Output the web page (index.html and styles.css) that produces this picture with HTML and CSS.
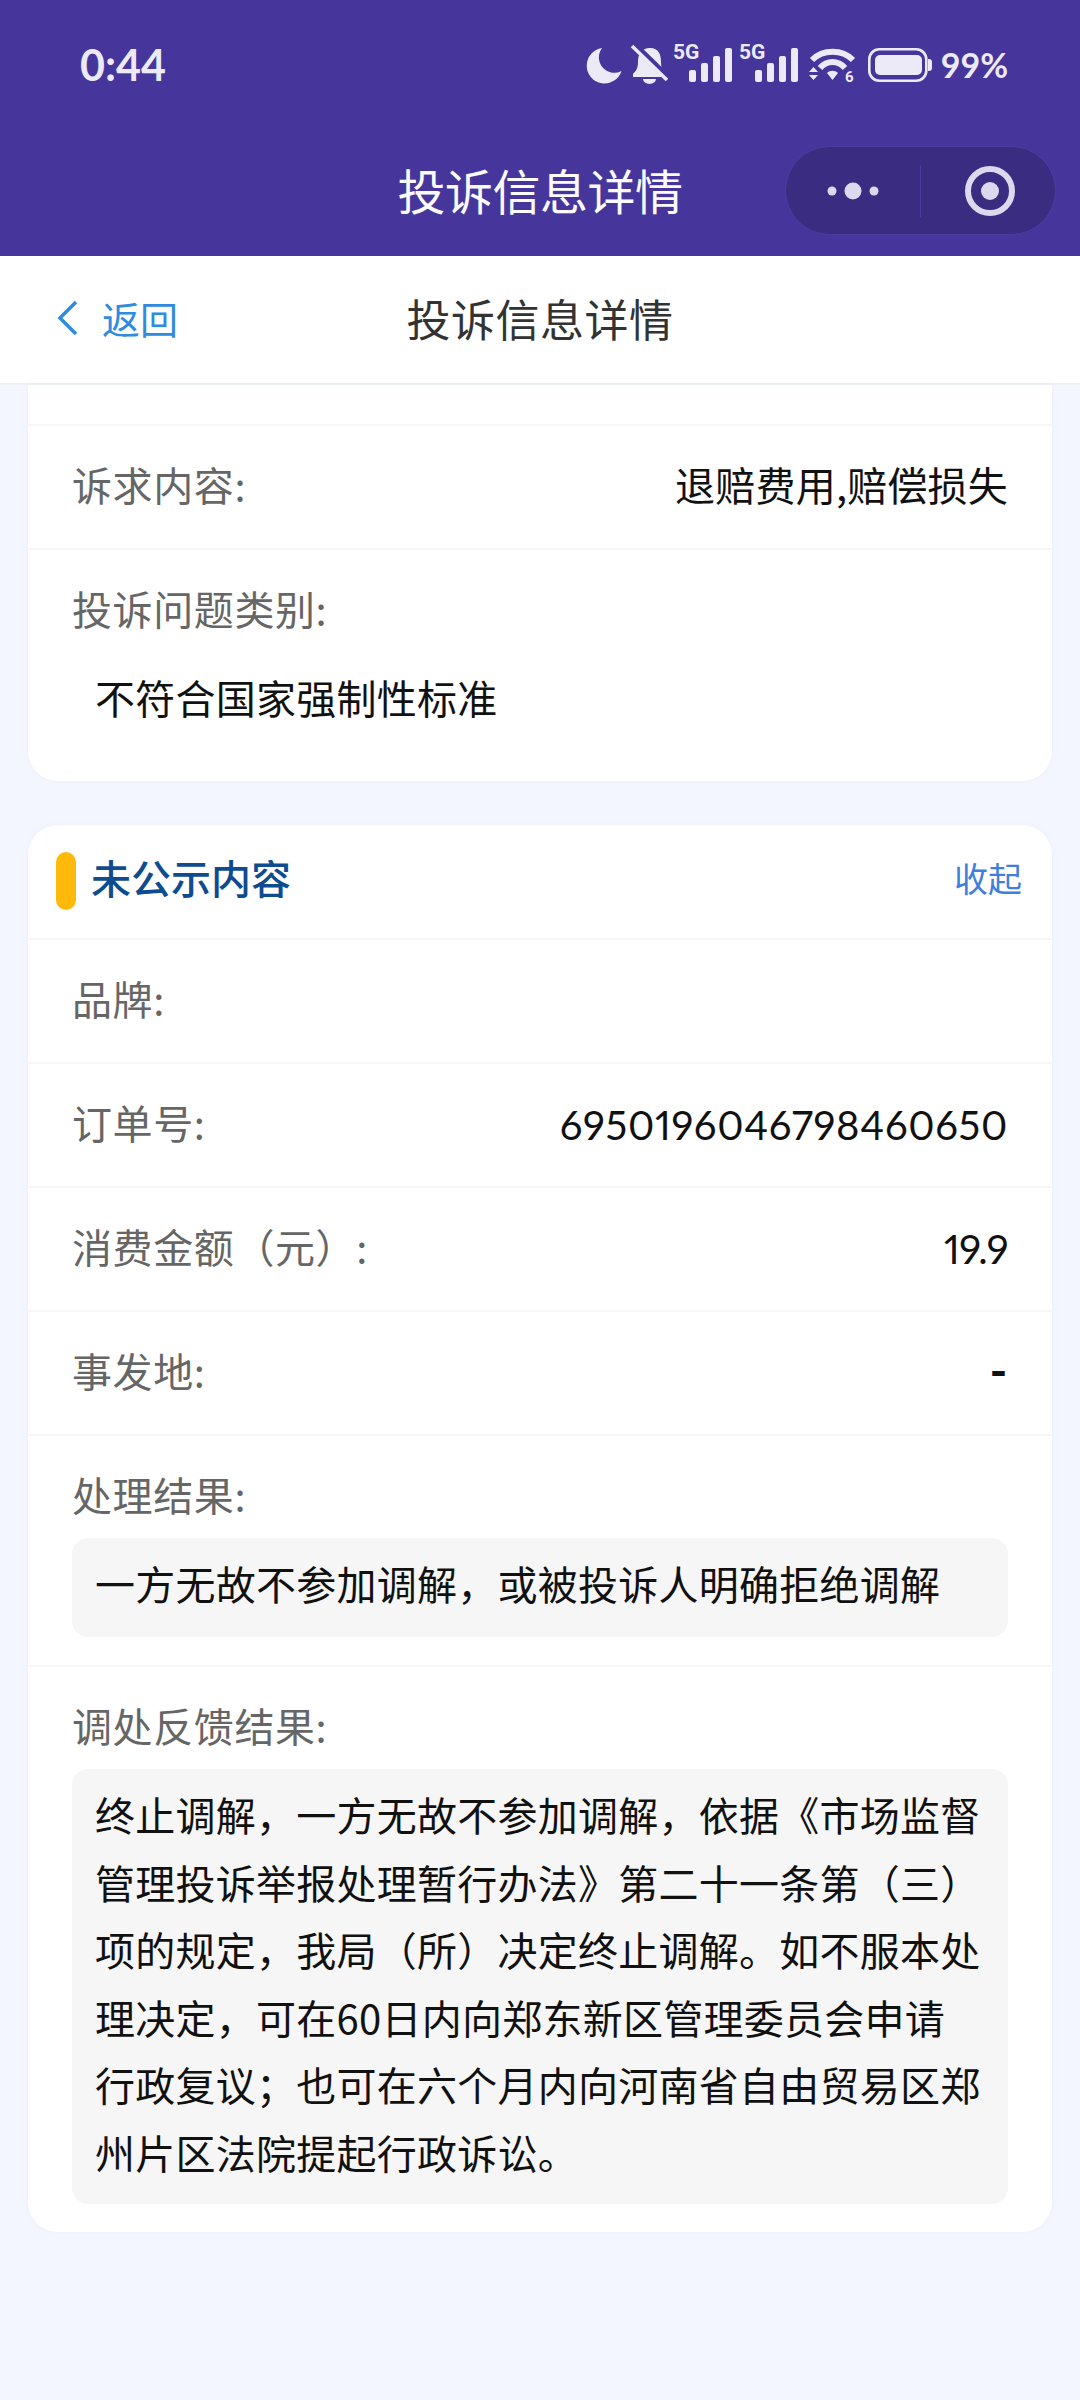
FILE: index.html
```html
<!DOCTYPE html>
<html lang="zh-CN">
<head>
<meta charset="utf-8">
<title>投诉信息详情</title>
<link rel="stylesheet" href="styles.css">
</head>
<body>
<div class="page">
  <header class="top">
    <div class="status">
      <span class="time">0:44</span>
      <div class="status-icons">
        <svg class="ic-moon" viewBox="0 0 36 37"><path d="M16 1A17.8 17.8 0 1 0 35.5 24A15.5 15.5 0 0 1 25 25.5A15.5 15.5 0 0 1 16 1Z"/></svg>
        <svg class="ic-bell" viewBox="0 0 37 40"><path d="M19 4C10 4 7 11 7 18C7 24 5 27 2 30V33H35V30C32 27 30 24 30 18C30 11 28 4 19 4Z"/><path d="M12 35H25A6.500 5 0 0 1 12 35Z"/><path class="bell-gap" d="M1 -1L38 35"/><path class="bell-slash" d="M1 2L36 36"/></svg>
        <svg class="ic-signal" viewBox="0 0 59 38"><text x="0" y="15" class="sig-label">5G</text><rect x="16" y="26" width="7" height="12" rx="2"/><rect x="28" y="19" width="7" height="19" rx="2"/><rect x="40" y="12" width="7" height="26" rx="2"/><rect x="52" y="4" width="7" height="34" rx="2"/></svg>
        <svg class="ic-signal" viewBox="0 0 59 38"><text x="0" y="15" class="sig-label">5G</text><rect x="16" y="26" width="7" height="12" rx="2"/><rect x="28" y="19" width="7" height="19" rx="2"/><rect x="40" y="12" width="7" height="26" rx="2"/><rect x="52" y="4" width="7" height="34" rx="2"/></svg>
        <svg class="ic-wifi" viewBox="0 0 47 36"><path class="wifi-arc" d="M3 13C14 2 33 2 44 13"/><path class="wifi-arc" d="M11 21C18 13 29 13 36 21"/><path d="M18 26C21 23 26 23 29 26L23.500 33Z"/><path d="M4.500 20L9 25H0Z"/><path d="M0 28H9L4.500 33Z"/><text x="36" y="35" class="wifi-six">6</text></svg>
        <svg class="ic-battery" viewBox="0 0 64 34"><rect class="bat-shell" x="1.300" y="1.300" width="57" height="31.400" rx="10"/><rect x="7" y="7" width="47" height="20" rx="5"/><path d="M60 11H61A3 3 0 0 1 64 14V20A3 3 0 0 1 61 23H60Z"/></svg>
        <span class="battery-text">99%</span>
      </div>
    </div>
    <div class="wx-nav">
      <span></span>
      <h1 class="wx-title">投诉信息详情</h1>
      <div class="capsule">
        <div class="capsule-part">
          <svg class="ic-dots" viewBox="0 0 52 18"><circle cx="5" cy="9" r="4.500"/><circle cx="26" cy="9" r="8.500"/><circle cx="47" cy="9" r="4.500"/></svg>
        </div>
        <div class="capsule-part capsule-right">
          <svg class="ic-ring" viewBox="0 0 52 52"><circle class="ring" cx="26" cy="26" r="22"/><circle cx="26" cy="26" r="9"/></svg>
        </div>
      </div>
    </div>
  </header>

  <nav class="sub-nav">
    <a class="back">
      <svg class="ic-back" viewBox="0 0 22 36"><path d="M19 2L3 18L19 34"/></svg>
      <span>返回</span>
    </a>
    <h2 class="sub-title">投诉信息详情</h2>
    <span></span>
  </nav>

  <main class="content">
    <section class="card">
      <div class="row-stub"></div>
      <div class="row">
        <span class="label">诉求内容:</span>
        <span class="value">退赔费用,赔偿损失</span>
      </div>
      <div class="row-block row-block-tall">
        <div class="label">投诉问题类别:</div>
        <div class="text-box plain">不符合国家强制性标准</div>
      </div>
    </section>

    <section class="card">
      <div class="card-head">
        <span class="marker"></span>
        <span class="card-title">未公示内容</span>
        <a class="collapse">收起</a>
      </div>
      <div class="row">
        <span class="label">品牌:</span>
        <span class="value"></span>
      </div>
      <div class="row">
        <span class="label">订单号:</span>
        <span class="value num">6950196046798460650</span>
      </div>
      <div class="row">
        <span class="label">消费金额（元）:</span>
        <span class="value num num-tight">19.9</span>
      </div>
      <div class="row">
        <span class="label">事发地:</span>
        <span class="value num dash">-</span>
      </div>
      <div class="row-block">
        <div class="label">处理结果:</div>
        <div class="text-box">一方无故不参加调解，或被投诉人明确拒绝调解</div>
      </div>
      <div class="row-block last">
        <div class="label">调处反馈结果:</div>
        <div class="text-box multi">终止调解，一方无故不参加调解，依据《市场监督管理投诉举报处理暂行办法》第二十一条第（三）项的规定，我局（所）决定终止调解。如不服本处理决定，可在60日内向郑东新区管理委员会申请行政复议；也可在六个月内向河南省自由贸易区郑州片区法院提起行政诉讼。</div>
      </div>
    </section>
  </main>
</div>
</body>
</html>
```

FILE: styles.css
```css
* { box-sizing: border-box; }
html, body { margin: 0; padding: 0; }
body {
  width: 1080px;
  height: 2400px;
  overflow: hidden;
  background: #f4f6ff;
  font-family: "Noto Sans CJK SC", "Noto Sans", sans-serif;
  color: #111;
}
h1, h2 { margin: 0; font-weight: 400; }

.top { height: 256px; background: #46369b; color: #fff; }
.status {
  height: 128px;
  padding: 0 72px 0 80px;
  display: flex;
  align-items: center;
  justify-content: space-between;
}
.time { font: 700 43px/1 Lato, sans-serif; color: #eceaf6; }
.status-icons { display: flex; align-items: center; margin-top: 2px; }
.status-icons svg { display: block; fill: #eceaf6; overflow: visible; }
.ic-moon { width: 36px; height: 37px; }
.ic-bell { width: 37px; height: 40px; margin-left: 9px; margin-top: -3px; }
.bell-gap { stroke: #46369b; stroke-width: 7; fill: none; }
.bell-slash { stroke: #eceaf6; stroke-width: 3.500; fill: none; }
.ic-signal { width: 59px; height: 38px; margin-top: -4px; }
.ic-signal:nth-of-type(3) { margin-left: 5px; }
.ic-signal:nth-of-type(4) { margin-left: 7px; }
.sig-label { font: 700 21px Roboto, sans-serif; fill: #eceaf6; }
.ic-wifi { width: 47px; height: 36px; margin-left: 11px; }
.wifi-arc { fill: none; stroke: #eceaf6; stroke-width: 6; }
.wifi-six { font: 700 15px Roboto, sans-serif; fill: #eceaf6; }
.ic-battery { width: 64px; height: 34px; margin-left: 12px; }
.ic-battery .bat-shell { fill: none; stroke: #eceaf6; stroke-width: 2.600; }
.battery-text { font: 700 34px/1 Lato, sans-serif; color: #eceaf6; margin-left: 9px; }

.wx-nav {
  height: 128px;
  padding: 18px 24px 0;
  display: grid;
  grid-template-columns: 1fr auto 1fr;
  align-items: start;
}
.wx-title { font-size: 48px; line-height: 87px; color: #fafaff; letter-spacing: -0.500px; }
.capsule {
  justify-self: end;
  width: 271px;
  height: 89px;
  border-radius: 45px;
  background: #3a2c80;
  border: 1px solid #4b3c9f;
  display: flex;
  align-items: center;
}
.capsule-part { flex: 1; display: flex; justify-content: center; align-items: center; height: 52px; }
.capsule-right { border-left: 1px solid #4b3c9f; }
.ic-dots { width: 52px; height: 18px; fill: #dcd9ee; display: block; }
.ic-ring { width: 52px; height: 52px; fill: #dcd9ee; display: block; margin-left: 4px; }
.ring { fill: none; stroke: #dcd9ee; stroke-width: 6; }

.sub-nav {
  height: 129px;
  padding-bottom: 3px;
  background: #fff;
  border-bottom: 2px solid #eef0f6;
  display: grid;
  grid-template-columns: 1fr auto 1fr;
  align-items: center;
}
.back { display: flex; align-items: center; padding-left: 57px; color: #2e8be0; font-size: 38px; line-height: 1; }
.ic-back { width: 22px; height: 36px; fill: none; stroke: #2e8be0; stroke-width: 3.500; margin-right: 23px; }
.sub-title { font-size: 44px; line-height: 60px; color: #333; letter-spacing: 0.500px; }

.content { padding: 0 28px; display: flex; flex-direction: column; gap: 44px; }
.card {
  background: #fff;
  border-radius: 0 0 30px 30px;
  box-shadow: 0 0 6px rgba(70, 100, 200, 0.05);
}
.card + .card { border-radius: 30px; }
.row-stub { height: 41px; border-bottom: 2px solid #f6f6f6; }
.row {
  padding: 25px 44px 31px;
  border-bottom: 2px solid #f6f6f6;
  display: flex;
  justify-content: space-between;
  font-size: 40px;
  line-height: 66px;
}
.label { color: #666; font-size: 40px; line-height: 66px; letter-spacing: 0.600px; }
.value { color: #111; white-space: nowrap; letter-spacing: 0.200px; }
.num {
  padding-top: 3px;
  margin-bottom: -3px;
  font-family: Lato, sans-serif;
  font-weight: 400;
  letter-spacing: 0.700px;
  font-variant-numeric: proportional-nums;
}
.num-tight { letter-spacing: -0.500px; }
.dash { font-weight: 700; font-size: 48px; padding-top: 0; margin-bottom: 0; }
.row-block {
  padding: 25px 44px 28px;
  border-bottom: 2px solid #f6f6f6;
}
.row-block.last { border-bottom: 0; }
.row-block-tall { border-bottom: 0; padding-bottom: 29px; }
.text-box {
  margin-top: 11px;
  padding: 12px 23px 20px;
  background: #f6f6f6;
  border-radius: 16px;
  color: #111;
  font-size: 40px;
  line-height: 67.500px;
  letter-spacing: 0.250px;
}
.text-box.plain { background: transparent; }
.text-box.multi { padding-bottom: 18px; }

.card-head {
  height: 115px;
  padding: 0 30px 0 28px;
  border-bottom: 2px solid #f6f6f6;
  display: flex;
  align-items: center;
}
.marker { width: 20px; height: 58px; border-radius: 10px; background: #ffb90a; }
.card-title { margin: 0 0 8px 15px; font-size: 40px; font-weight: 500; color: #0f4c8f; flex: 1; }
.collapse { margin-bottom: 8px; font-size: 34px; color: #3f7fdc; }
```
